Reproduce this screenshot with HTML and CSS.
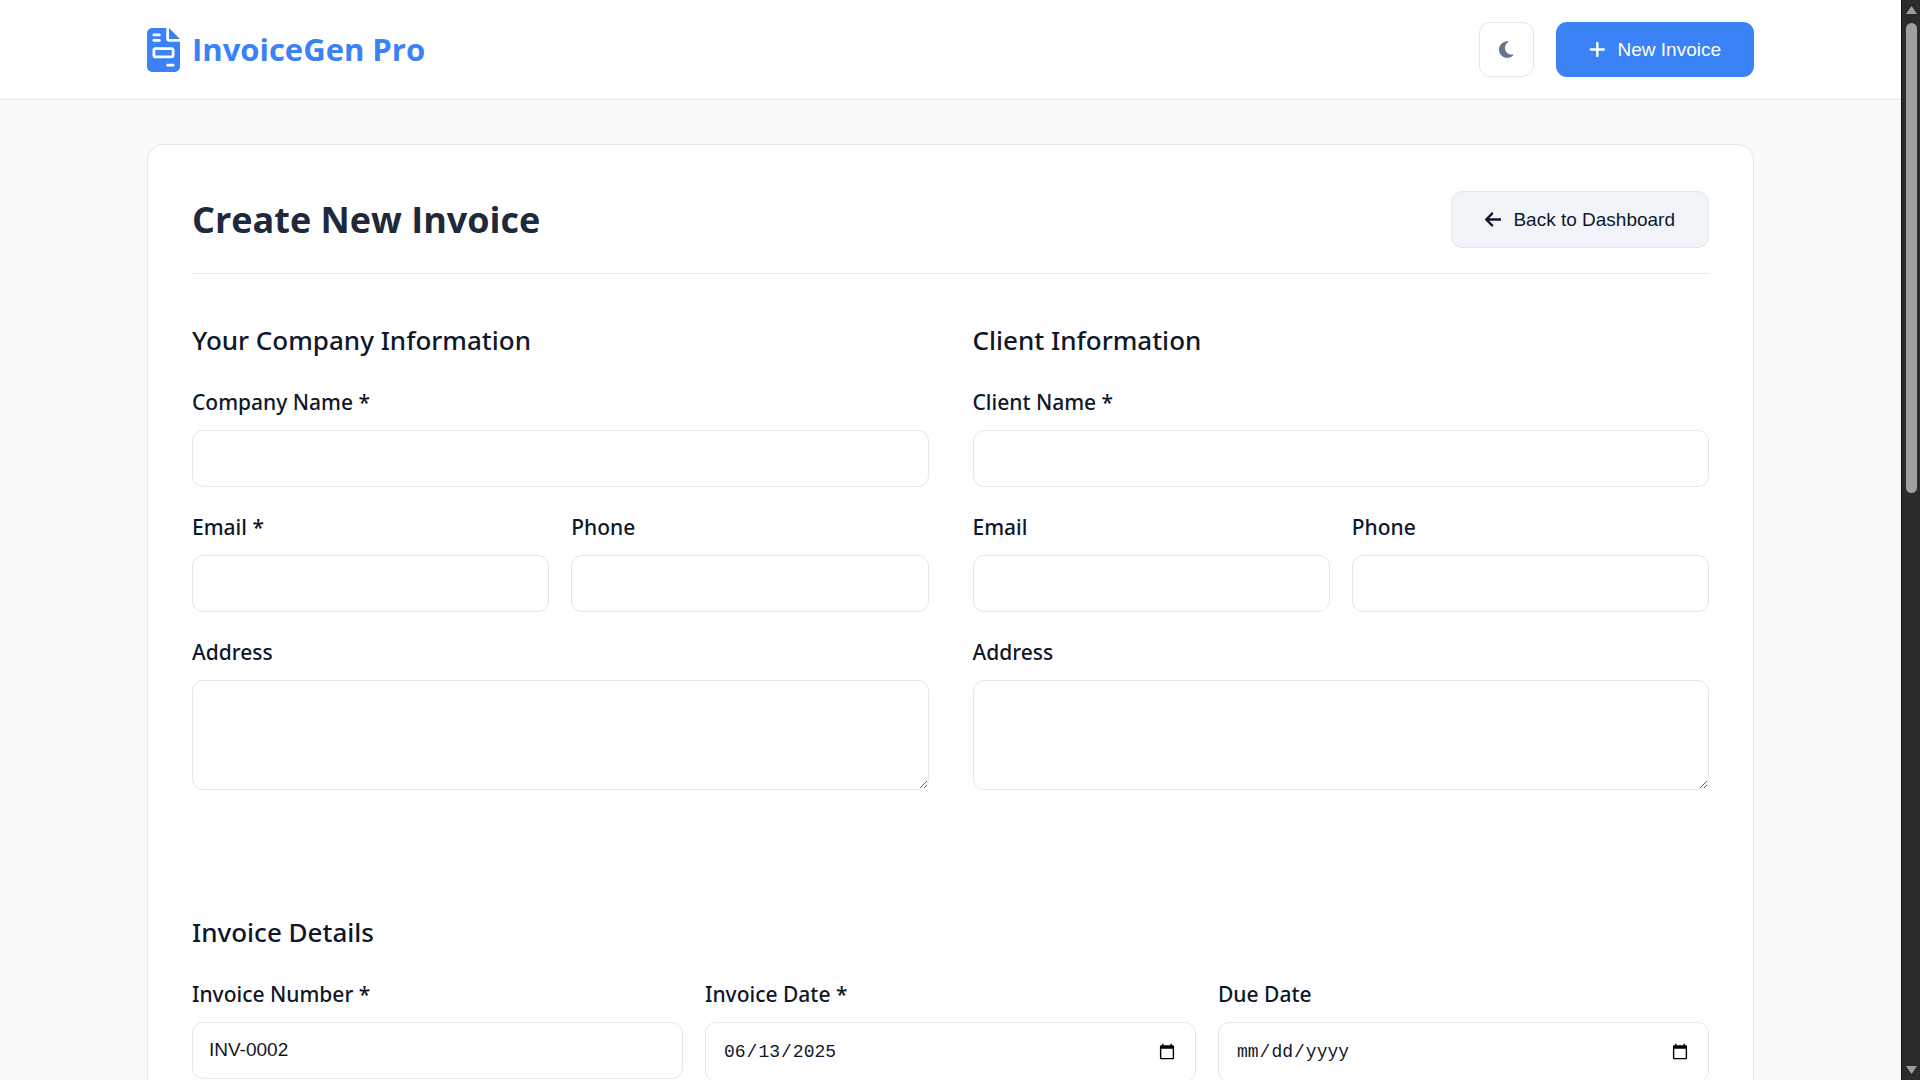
FILE: index.html
```html
<!DOCTYPE html>
<html lang="en-US">
<head>
<meta charset="utf-8">
<meta name="viewport" content="width=device-width, initial-scale=1">
<title>InvoiceGen Pro</title>
<link rel="stylesheet" href="styles.css">
</head>
<body>
<div class="app">
  <div class="page">
    <header class="topbar">
      <div class="container topbar-inner">
        <div class="logo">
          <svg class="logo-icon" viewBox="0 0 384 512" aria-hidden="true"><path d="M64 0C28.7 0 0 28.7 0 64V448c0 35.3 28.7 64 64 64H320c35.3 0 64-28.7 64-64V160H256c-17.7 0-32-14.3-32-32V0H64zM256 0V128H384L256 0zM80 64h64c8.8 0 16 7.2 16 16s-7.2 16-16 16H80c-8.8 0-16-7.2-16-16s7.2-16 16-16zm0 64h64c8.8 0 16 7.2 16 16s-7.2 16-16 16H80c-8.8 0-16-7.2-16-16s7.2-16 16-16zm16 96H288c17.7 0 32 14.3 32 32v64c0 17.7-14.3 32-32 32H96c-17.7 0-32-14.3-32-32V256c0-17.7 14.3-32 32-32zm0 32v64H288V256H96zM240 416h64c8.8 0 16 7.2 16 16s-7.2 16-16 16H240c-8.8 0-16-7.2-16-16s7.2-16 16-16z"/></svg>
          <span>InvoiceGen Pro</span>
        </div>
        <div class="actions">
          <button class="theme-toggle" type="button" aria-label="Toggle theme">
            <svg class="icon" viewBox="0 0 384 512" aria-hidden="true"><path d="M223.5 32C100 32 0 132.3 0 256S100 480 223.5 480c60.6 0 115.5-24.2 155.8-63.4c5-4.9 6.3-12.5 3.1-18.7s-10.1-9.7-17-8.5c-9.8 1.7-19.8 2.6-30.1 2.6c-96.9 0-175.5-78.8-175.5-176c0-65.8 36-123.1 89.3-153.3c6.1-3.5 9.2-10.5 7.7-17.3s-7.3-11.9-14.3-12.5c-6.3-.5-12.6-.8-19-.8z"/></svg>
          </button>
          <button class="btn btn-primary" type="button">
            <svg class="icon" viewBox="0 0 448 512" aria-hidden="true"><path d="M256 80c0-17.7-14.3-32-32-32s-32 14.3-32 32V224H48c-17.7 0-32 14.3-32 32s14.3 32 32 32H192V432c0 17.7 14.3 32 32 32s32-14.3 32-32V288H400c17.7 0 32-14.3 32-32s-14.3-32-32-32H256V80z"/></svg>
            New Invoice
          </button>
        </div>
      </div>
    </header>

    <main class="container">
      <form class="card">
        <div class="card-header">
          <h1>Create New Invoice</h1>
          <button class="btn btn-secondary" type="button">
            <svg class="icon" viewBox="0 0 448 512" aria-hidden="true"><path d="M9.4 233.4c-12.5 12.5-12.5 32.8 0 45.3l160 160c12.5 12.5 32.8 12.5 45.3 0s12.5-32.8 0-45.3L109.2 288 416 288c17.7 0 32-14.3 32-32s-14.3-32-32-32l-306.7 0L214.6 118.6c12.5-12.5 12.5-32.8 0-45.3s-32.8-12.5-45.3 0l-160 160z"/></svg>
            Back to Dashboard
          </button>
        </div>

        <div class="parties">
          <section>
            <h2>Your Company Information</h2>
            <div class="field">
              <label for="company-name">Company Name *</label>
              <input id="company-name" type="text">
            </div>
            <div class="row row-2">
              <div class="field">
                <label for="company-email">Email *</label>
                <input id="company-email" type="email">
              </div>
              <div class="field">
                <label for="company-phone">Phone</label>
                <input id="company-phone" type="tel">
              </div>
            </div>
            <div class="field">
              <label for="company-address">Address</label>
              <textarea id="company-address"></textarea>
            </div>
          </section>
          <section>
            <h2>Client Information</h2>
            <div class="field">
              <label for="client-name">Client Name *</label>
              <input id="client-name" type="text">
            </div>
            <div class="row row-2">
              <div class="field">
                <label for="client-email">Email</label>
                <input id="client-email" type="email">
              </div>
              <div class="field">
                <label for="client-phone">Phone</label>
                <input id="client-phone" type="tel">
              </div>
            </div>
            <div class="field">
              <label for="client-address">Address</label>
              <textarea id="client-address"></textarea>
            </div>
          </section>
        </div>

        <section>
          <h2>Invoice Details</h2>
          <div class="row row-3">
            <div class="field">
              <label for="invoice-number">Invoice Number *</label>
              <input id="invoice-number" type="text" value="INV-0002">
            </div>
            <div class="field">
              <label for="invoice-date">Invoice Date *</label>
              <input id="invoice-date" type="date" value="2025-06-13">
            </div>
            <div class="field">
              <label for="due-date">Due Date</label>
              <input id="due-date" type="date">
            </div>
          </div>
        </section>
      </form>
    </main>
  </div>

  <div class="scrollbar" aria-hidden="true">
    <svg class="scroll-arrow" viewBox="0 0 13 10"><path d="M6.5 1 12 9H1z"/></svg>
    <div class="scroll-track"><div class="scroll-thumb"></div></div>
    <svg class="scroll-arrow" viewBox="0 0 13 10"><path d="M6.5 9 12 1H1z"/></svg>
  </div>
</div>
</body>
</html>
```
FILE: styles.css
```css
:root {
  --primary: #3b82f6;
  --ink: #1e293b;
  --text: #0f172a;
  --muted: #64748b;
  --border: #e2e8f0;
  --surface: #ffffff;
  --soft: #f1f5f9;
  --bg: #f8fafc;
}

* { box-sizing: border-box; }

body {
  margin: 0;
  background: var(--bg);
  color: var(--text);
  font-family: "Noto Sans", "Open Sans", sans-serif;
  font-size: 20px;
}

.app {
  display: grid;
  grid-template-columns: minmax(0, 1fr) 19px;
  height: 100vh;
}

.page {
  overflow-y: auto;
  scrollbar-width: none;
}

.container {
  width: calc(100% - 44px);
  max-width: 1607px;
  margin: 0 auto;
}

.topbar {
  background: var(--surface);
  border-bottom: 1px solid var(--border);
  padding: 22px 0;
}

.topbar-inner,
.actions,
.logo {
  display: flex;
  align-items: center;
}

.topbar-inner { justify-content: space-between; }
.actions { gap: 22px; }

.logo {
  gap: 12px;
  color: var(--primary);
  font-family: "Open Sans", sans-serif;
  font-size: 31px;
  font-weight: 700;
  line-height: 55px;
}

.logo-icon {
  height: 44px;
  fill: currentColor;
}

.icon {
  height: 19px;
  fill: currentColor;
}

button,
input,
textarea {
  border: 1px solid var(--border);
  border-radius: 11px;
  color: var(--text);
  font-family: "Liberation Sans", Arial, sans-serif;
  font-size: 19px;
}

.theme-toggle {
  display: grid;
  place-items: center;
  width: 55px;
  height: 55px;
  padding: 0;
  background: var(--surface);
  color: var(--muted);
}

.btn {
  display: flex;
  align-items: center;
  gap: 12px;
  padding: 0 33px;
  height: 57px;
}

.btn-primary {
  height: 55px;
  border: 0;
  background: var(--primary);
  color: #ffffff;
}

.btn-secondary { background: var(--soft); }

.card {
  margin: 44px 0;
  padding: 44px;
  background: var(--surface);
  border: 1px solid var(--border);
  border-radius: 16px;
}

.card-header {
  display: flex;
  align-items: center;
  justify-content: space-between;
  margin-bottom: 44px;
  padding-bottom: 23px;
  border-bottom: 1px solid var(--border);
}

h1 {
  margin: 0;
  color: var(--ink);
  font-family: "Open Sans", sans-serif;
  font-size: 36px;
  font-weight: 700;
  line-height: 61px;
}

h2 {
  margin: 0 0 22px;
  font-size: 26px;
  font-weight: 500;
  line-height: 45px;
}

.parties {
  display: grid;
  grid-template-columns: repeat(2, minmax(0, 1fr));
  gap: 44px;
  margin-bottom: 97px;
}

.row {
  display: grid;
  gap: 22px;
}

.row-2 { grid-template-columns: repeat(2, minmax(0, 1fr)); }
.row-3 { grid-template-columns: repeat(3, minmax(0, 1fr)); }

.field { margin-bottom: 23px; }

label {
  display: block;
  margin-bottom: 11px;
  font-size: 21px;
  font-weight: 500;
  line-height: 34px;
}

input,
textarea {
  display: block;
  width: 100%;
  background: var(--surface);
  padding: 0 16px 2px;
}

input { height: 57px; }

input[type="date"] {
  height: 60px;
  padding: 0 17px;
  font-family: "Liberation Mono", monospace;
  font-size: 18px;
}

textarea {
  height: 110px;
  padding: 16px;
  resize: vertical;
}

.scrollbar {
  display: flex;
  flex-direction: column;
  align-items: center;
  gap: 8px;
  padding: 5px 0;
  background: #2c2c2c;
  border-left: 1px solid #111111;
}

.scroll-arrow {
  width: 13px;
  height: 10px;
  fill: #9f9f9f;
}

.scroll-track { flex: 1; }

.scroll-thumb {
  width: 11px;
  height: 45.5%;
  border-radius: 6px;
  background: #9f9f9f;
}
```
